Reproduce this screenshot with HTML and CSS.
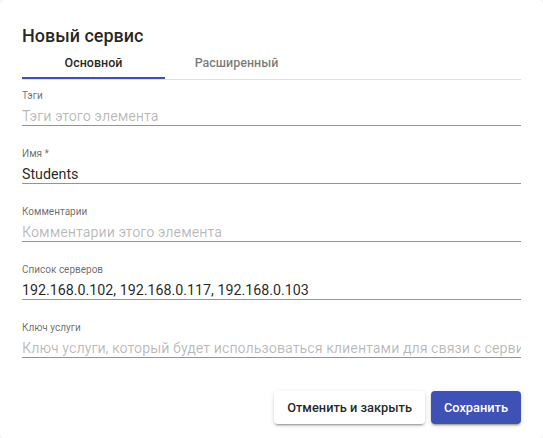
FILE: index.html
```html
<!DOCTYPE html>
<html lang="ru">
<head>
<meta charset="utf-8">
<title>Новый сервис</title>
<link rel="stylesheet" href="styles.css">
</head>
<body>
<div class="dialog">
  <h1 class="title">Новый сервис</h1>
  <div class="tabs">
    <div class="tab active">Основной</div>
    <div class="tab">Расширенный</div>
  </div>
  <div class="fields">
    <label class="field">
      <span class="label">Тэги</span>
      <input class="input" type="text" placeholder="Тэги этого элемента">
    </label>
    <label class="field">
      <span class="label">Имя *</span>
      <input class="input" type="text" value="Students">
    </label>
    <label class="field">
      <span class="label">Комментарии</span>
      <input class="input" type="text" placeholder="Комментарии этого элемента">
    </label>
    <label class="field">
      <span class="label">Список серверов</span>
      <input class="input" type="text" value="192.168.0.102, 192.168.0.117, 192.168.0.103">
    </label>
    <label class="field">
      <span class="label">Ключ услуги</span>
      <input class="input" type="text" placeholder="Ключ услуги, который будет использоваться клиентами для связи с сервисом">
    </label>
  </div>
  <div class="actions">
    <button class="btn btn-plain" type="button">Отменить и закрыть</button>
    <button class="btn btn-primary" type="button">Сохранить</button>
  </div>
</div>
</body>
</html>
```

FILE: styles.css
```css
html, body {
  margin: 0;
  padding: 0;
  background: #ffffff;
}

body {
  font-family: Roboto, "Liberation Sans", sans-serif;
  color: rgba(0, 0, 0, 0.87);
}

.dialog {
  box-sizing: border-box;
  width: 543px;
  height: 438px;
  padding: 24px 22px 0 22px;
  background: #fff;
  border-radius: 4px;
  box-shadow: 0 0 1px rgba(0, 0, 0, 0.25);
  display: flex;
  flex-direction: column;
}

.title {
  margin: 0;
  font-size: 18px;
  line-height: 24px;
  font-weight: 500;
  color: rgba(0, 0, 0, 0.87);
}

.tabs {
  display: flex;
  border-bottom: 1px solid #e0e0e0;
}

.tab {
  width: 143px;
  padding: 7px 0 6px;
  border-bottom: 2px solid transparent;
  text-align: center;
  font-size: 12.5px;
  line-height: 16px;
  font-weight: 500;
  color: rgba(0, 0, 0, 0.54);
}

.tab.active {
  color: rgba(0, 0, 0, 0.87);
  border-bottom-color: #3f51b5;
}

.fields {
  display: flex;
  flex-direction: column;
  gap: 21px;
  padding-top: 9px;
}

.field {
  display: flex;
  flex-direction: column;
  gap: 4px;
}

.label {
  font-size: 10px;
  line-height: 14px;
  color: rgba(0, 0, 0, 0.6);
}

.input {
  box-sizing: content-box;
  display: block;
  width: 100%;
  height: 18px;
  margin: 0;
  padding: 0;
  border: none;
  border-bottom: 1px solid #949494;
  outline: none;
  background: transparent;
  font-family: Roboto, "Liberation Sans", sans-serif;
  font-size: 14.25px;
  line-height: 18px;
  color: rgba(0, 0, 0, 0.87);
}

.input::placeholder {
  color: rgba(0, 0, 0, 0.28);
  opacity: 1;
}

.actions {
  display: flex;
  justify-content: flex-end;
  gap: 6px;
  margin-top: 33px;
}

.btn {
  height: 33px;
  padding: 0 13px;
  border: none;
  border-radius: 4px;
  font-family: Roboto, "Liberation Sans", sans-serif;
  font-size: 12.8px;
  font-weight: 500;
  line-height: 33px;
  cursor: pointer;
  box-shadow: 0 3px 1px -2px rgba(0, 0, 0, 0.2), 0 2px 2px 0 rgba(0, 0, 0, 0.14), 0 1px 5px 0 rgba(0, 0, 0, 0.12);
}

.btn-plain {
  background: #fff;
  color: rgba(0, 0, 0, 0.87);
}

.btn-primary {
  background: #3f51b5;
  color: #fff;
}
```
